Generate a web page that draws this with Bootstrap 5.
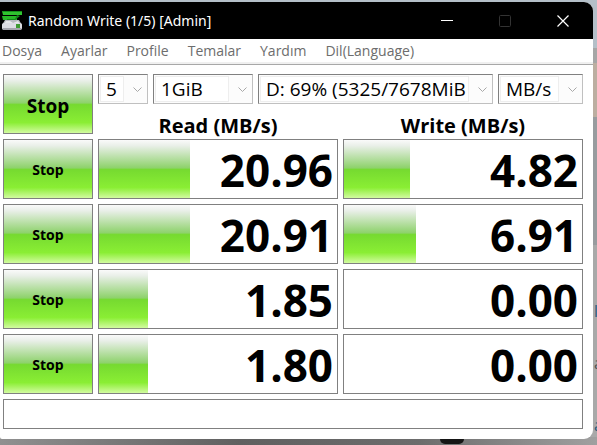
<!DOCTYPE html>
<html lang="tr">
<head>
<meta charset="utf-8">
<meta name="viewport" content="width=device-width, initial-scale=1">
<title>Random Write (1/5) [Admin]</title>
<link href="https://cdn.jsdelivr.net/npm/bootstrap@5.3.0/dist/css/bootstrap.min.css" rel="stylesheet">
<style>
body {
  font-family: "Open Sans", "Noto Sans", sans-serif;
  color: #000;
  min-height: 100vh;
  padding: 2px 4px 0 0;
  background:
    linear-gradient(90deg, #909090, #606060 40%, #6c6c6c 70%, #a0a0a0) bottom / 100% 8px no-repeat,
    linear-gradient(#b4bfc8 0 48px, #a6a6a6 48px 63px, #bcaea1 63px 117px, #989c9f 117px 245px, #a9a9a9 245px);
}
.app-window { background: #fff; border-radius: 0 9px 9px 2px; }
.title-bar { background: #000; height: 37px; padding: 0 1px 0 2px; }
.title-text { font-family: "Noto Sans", "Open Sans", sans-serif; font-size: 14px; line-height: 20px; }
.title-group { gap: 6px; }
.caption-btn { width: 58px; height: 37px; color: #fff; }
.caption-btn:disabled { color: #333; opacity: 1; border: 0; }
.menu-bar { height: 23px; gap: 19px; padding-left: 2px; }
.menu-bar a { color: #6d6d6d; font-size: 14px; line-height: 24px; }
.menu-rule { height: 3px; background: #f0f0f0; border-bottom: 1px solid #a8a8a8; }
.bench { padding: 9px 10px 10px 3px; gap: 5px; }
.bench-row { display: grid; grid-template-columns: 90px minmax(0, 1fr) minmax(0, 1fr); gap: 5px; }
.head-cells { grid-column: span 2; }
.picker-row { gap: 5px; }
.picker {
  height: 30px;
  padding: 0 23px 0 7px;
  font-size: 19px;
  line-height: 28px;
  color: #000;
  border: 1px solid #c0c0c0;
  border-top-color: #808080;
  border-left-color: #808080;
  border-radius: 0;
  background:
    url("data:image/svg+xml,%3Csvg xmlns='http://www.w3.org/2000/svg' viewBox='0 0 9 5'%3E%3Cpath d='M.5.5l4 4 4-4' fill='none' stroke='%23a8a8a8'/%3E%3C/svg%3E") right 5px center / 9px 5px no-repeat,
    linear-gradient(#fff, #fff) 2px 2px / calc(100% - 26px) calc(100% - 4px) no-repeat,
    linear-gradient(#eee, #eee) 1px 1px / calc(100% - 24px) calc(100% - 2px) no-repeat,
    #fcfcfc;
}
.picker-count { width: 50px; }
.picker-size { width: 100px; }
.picker-unit { width: 85px; }
.column-title { font-size: 20px; line-height: 24px; padding-top: 10px; height: 30px; }
.glow { background: linear-gradient(#fafafa 0, #e9efe8 10%, #8ed26c 48%, #76da30 51%, #8aee34 82%, #d2fba0 100%); }
.stop-btn { border: 1px solid #808080; height: 60px; font-size: 14px; font-weight: 700; color: #000; }
.stop-all { font-size: 19px; padding: 4px 0 0; }
.meter { border: 1px solid #808080; height: 60px; }
.meter-value { font-size: 44px; line-height: 60px; font-weight: 700; padding-right: 4px; }
.status-line { border: 1px solid #808080; height: 30px; }
.backdrop-dot { position: absolute; left: 440px; top: 439px; width: 24px; height: 5px; background: #151515; border-radius: 0 0 12px 12px; }
.edge-text { position: absolute; left: 594px; width: 3px; font-size: 16px; line-height: 20px; overflow: hidden; color: #2a5a7c; }
.edge-one { top: 301px; }
.edge-two { top: 353px; color: #555; }
.edge-three { top: 415px; }
</style>
<script defer src="https://cdn.jsdelivr.net/npm/bootstrap@5.3.0/dist/js/bootstrap.bundle.min.js"></script>
</head>
<body class="position-relative overflow-hidden">
<main class="app-window d-flex flex-column overflow-hidden">
  <header class="title-bar d-flex align-items-center justify-content-between text-white">
    <div class="title-group d-flex align-items-center">
      <svg width="20" height="22" viewBox="0 0 20 22" aria-hidden="true">
        <path d="M0 1h20v4H1z" fill="#2fc42f"/><path d="M0 1h20v1H0z" fill="#14931b"/>
        <path d="M0 6h15v4H1z" fill="#28b828"/><path d="M15 5l3 1-6 5H5V9h8z" fill="#128a18"/>
        <path d="M3 10h14l3 5H0z" fill="#b8bbc1"/><path d="M4 11h4l3 2 5-2 2 3H2z" fill="#e8e8ea"/>
        <rect y="13" width="20" height="7" rx="2" fill="#dddde3"/><path d="M1 18h18v2H1z" fill="#a5a5ad"/>
        <rect x="14" y="14" width="4" height="4" fill="#3f9b32"/>
      </svg>
      <span class="title-text">Random Write (1/5) [Admin]</span>
    </div>
    <div class="d-flex">
      <button class="caption-btn btn p-0 rounded-0 border-0 d-flex align-items-center justify-content-center" type="button" aria-label="Minimize"><svg width="12" height="12" viewBox="0 0 12 12"><path d="M0 5.5h12" stroke="currentColor"/></svg></button>
      <button class="caption-btn btn p-0 rounded-0 border-0 d-flex align-items-center justify-content-center" type="button" aria-label="Maximize" disabled><svg width="12" height="12" viewBox="0 0 12 12"><rect x=".5" y=".5" width="11" height="11" rx="1" fill="none" stroke="currentColor"/></svg></button>
      <button class="caption-btn btn p-0 rounded-0 border-0 d-flex align-items-center justify-content-center" type="button" aria-label="Close"><svg width="12" height="12" viewBox="0 0 12 12"><path d="M.5.5l11 11M11.5.5l-11 11" stroke="currentColor" stroke-width="1.2"/></svg></button>
    </div>
  </header>
  <nav class="menu-bar d-flex align-items-center" aria-label="Menu">
    <a class="text-decoration-none" href="#">Dosya</a>
    <a class="text-decoration-none" href="#">Ayarlar</a>
    <a class="text-decoration-none" href="#">Profile</a>
    <a class="text-decoration-none" href="#">Temalar</a>
    <a class="text-decoration-none" href="#">Yardım</a>
    <a class="text-decoration-none" href="#">Dil(Language)</a>
  </nav>
  <div class="menu-rule"></div>
  <div class="bench d-flex flex-column">
    <div class="bench-row">
      <button class="stop-btn stop-all glow btn rounded-0" type="button">Stop</button>
      <div class="head-cells">
        <div class="d-flex picker-row">
          <select class="picker picker-count form-select flex-shrink-0" aria-label="Test count"><option>5</option></select>
          <select class="picker picker-size form-select flex-shrink-0" aria-label="Test size"><option>1GiB</option></select>
          <select class="picker form-select flex-fill" aria-label="Drive"><option>D: 69% (5325/7678MiB</option></select>
          <select class="picker picker-unit form-select flex-shrink-0" aria-label="Unit"><option>MB/s</option></select>
        </div>
        <div class="d-flex picker-row text-center">
          <h2 class="column-title fw-bold m-0 w-50">Read (MB/s)</h2>
          <h2 class="column-title fw-bold m-0 w-50">Write (MB/s)</h2>
        </div>
      </div>
    </div>
    <div class="bench-row">
      <button class="stop-btn glow btn rounded-0 p-0" type="button">Stop</button>
      <div class="meter d-flex"><div class="glow" style="width:38.2%"></div><div class="meter-value flex-fill text-end">20.96</div></div>
      <div class="meter d-flex"><div class="glow" style="width:27.7%"></div><div class="meter-value flex-fill text-end">4.82</div></div>
    </div>
    <div class="bench-row">
      <button class="stop-btn glow btn rounded-0 p-0" type="button">Stop</button>
      <div class="meter d-flex"><div class="glow" style="width:38.2%"></div><div class="meter-value flex-fill text-end">20.91</div></div>
      <div class="meter d-flex"><div class="glow" style="width:30.2%"></div><div class="meter-value flex-fill text-end">6.91</div></div>
    </div>
    <div class="bench-row">
      <button class="stop-btn glow btn rounded-0 p-0" type="button">Stop</button>
      <div class="meter d-flex"><div class="glow" style="width:20.6%"></div><div class="meter-value flex-fill text-end">1.85</div></div>
      <div class="meter d-flex"><div class="meter-value flex-fill text-end">0.00</div></div>
    </div>
    <div class="bench-row">
      <button class="stop-btn glow btn rounded-0 p-0" type="button">Stop</button>
      <div class="meter d-flex"><div class="glow" style="width:20.6%"></div><div class="meter-value flex-fill text-end">1.80</div></div>
      <div class="meter d-flex"><div class="meter-value flex-fill text-end">0.00</div></div>
    </div>
    <div class="status-line" role="status"></div>
  </div>
</main>
<div class="backdrop-dot"></div>
<span class="edge-text edge-one">l</span>
<span class="edge-text edge-two">a</span>
<span class="edge-text edge-three">a</span>
</body>
</html>
